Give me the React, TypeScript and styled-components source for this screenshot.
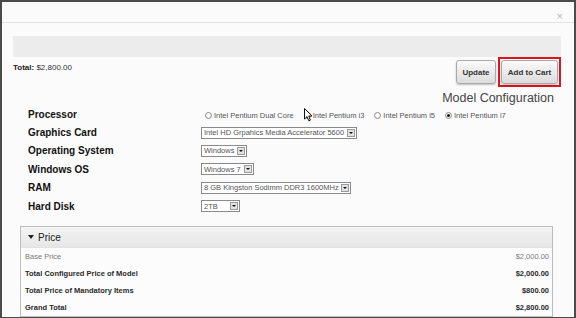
import { Fragment } from 'react'
import styled, { createGlobalStyle } from 'styled-components'

const GlobalStyle = createGlobalStyle`
  html, body {
    margin: 0;
    padding: 0;
    background: #fff;
  }
  body {
    font-family: 'Liberation Sans', Arial, sans-serif;
  }
`

const Modal = styled.div`
  width: 576px;
  height: 318px;
  box-sizing: border-box;
  border-style: solid;
  border-color: #4a4a4a;
  border-width: 2px 2px 1px 2px;
  background: #fbfbfb;
  overflow: hidden;
  display: flex;
  flex-direction: column;
`

const Header = styled.div`
  height: 20px;
  flex: 0 0 20px;
  border-bottom: 1px solid #e3e3e3;
  display: flex;
  justify-content: flex-end;
  align-items: flex-end;
  padding-right: 11px;
`

const Close = styled.span`
  font-size: 11px;
  line-height: 10px;
  color: #b8b8b8;
  margin-bottom: 1px;
`

const Body = styled.div`
  padding: 13px 13px 0 11px;
`

const GrayBar = styled.div`
  height: 21px;
  background: #ececec;
`

const Toolbar = styled.div`
  display: flex;
  justify-content: space-between;
  align-items: flex-start;
  height: 30px;
`

const Total = styled.div`
  margin-top: 6px;
  font-size: 8px;
  line-height: 10px;
  color: #333;

  b {
    color: #222;
  }
`

const Actions = styled.div`
  display: flex;
  align-items: center;
  gap: 2px;
  height: 30px;
`

const Button = styled.button<{ $w: number }>`
  width: ${(p) => p.$w}px;
  height: 24px;
  box-sizing: border-box;
  border: 1px solid #a9a9a9;
  border-radius: 3px;
  background: linear-gradient(#fafafa, #dcdcdc);
  font-family: 'Liberation Sans', Arial, sans-serif;
  font-weight: bold;
  font-size: 8px;
  color: #333;
  padding: 0;
  box-shadow: 0 1px 2px rgba(0, 0, 0, 0.25);
`

const Highlight = styled.div`
  border: 2px solid #e0141c;
  padding: 1px;
  display: flex;
`

const Title = styled.div`
  margin-top: 4px;
  padding-right: 7px;
  text-align: right;
  font-size: 12.5px;
  line-height: 14px;
  color: #444;
`

const Form = styled.div`
  display: grid;
  grid-template-columns: 173px 1fr;
  grid-auto-rows: 18.4px;
  align-items: center;
  padding-left: 15px;
`

const Label = styled.div`
  font-weight: bold;
  font-size: 10px;
  color: #111;
`

const RadioRow = styled.div`
  display: flex;
  align-items: center;
  margin-top: 3px;
`

const Option = styled.span`
  position: relative;
  display: inline-flex;
  align-items: center;
  font-size: 7.5px;
  color: #555;
  margin-left: 4px;
  margin-right: 6px;
`

const Radio = styled.span<{ $on?: boolean }>`
  width: 7px;
  height: 7px;
  box-sizing: border-box;
  border-radius: 50%;
  border: 1px solid #8c8c8c;
  background: radial-gradient(circle at 40% 35%, #fff 40%, #e4e4e4);
  margin-right: 2px;
  display: flex;
  align-items: center;
  justify-content: center;

  &::after {
    content: '';
    width: 3px;
    height: 3px;
    border-radius: 50%;
    background: ${(p) => (p.$on ? '#111' : 'transparent')};
  }
`

const Cursor = styled.svg`
  position: absolute;
  left: 0;
  top: -3px;
`

const Select = styled.div<{ $w: number }>`
  width: ${(p) => p.$w}px;
  height: 12px;
  box-sizing: border-box;
  border: 1px solid #8a8a8a;
  background: #fff;
  display: flex;
  align-items: center;
  padding-left: 2px;
  font-size: 7.5px;
  color: #555;
  white-space: nowrap;
`

const Arrow = styled.span`
  margin-left: auto;
  margin-right: 1px;
  width: 8px;
  height: 8px;
  box-sizing: border-box;
  border: 1px solid #9a9a9a;
  background: #e2e2e2;
  display: flex;
  align-items: center;
  justify-content: center;

  &::after {
    content: '';
    border-left: 2px solid transparent;
    border-right: 2px solid transparent;
    border-top: 2px solid #111;
  }
`

const Panel = styled.div`
  margin: 11px 8px 0 7px;
  border: 1px solid #bdbdbd;
  background: #fcfcfc;
`

const PanelHead = styled.div`
  height: 20px;
  display: flex;
  align-items: center;
  gap: 4px;
  padding-left: 7px;
  background: linear-gradient(#f4f4f4, #e6e6e6);
  border-bottom: 1px solid #e2e2e2;
  font-size: 10px;
  color: #222;
`

const Caret = styled.span`
  width: 0;
  height: 0;
  border-left: 3px solid transparent;
  border-right: 3px solid transparent;
  border-top: 4px solid #222;
`

const PriceRow = styled.div<{ $strong?: boolean }>`
  height: 17px;
  display: flex;
  align-items: center;
  justify-content: space-between;
  padding: 0 3px 0 4px;
  font-size: 7.5px;
  font-weight: ${(p) => (p.$strong ? 'bold' : 'normal')};
  color: ${(p) => (p.$strong ? '#2a2a2a' : '#7a7a7a')};
`

const fields = [
  { label: 'Graphics Card', value: 'Intel HD Grpahics Media Accelerator 5600', w: 156 },
  { label: 'Operating System', value: 'Windows', w: 46 },
  { label: 'Windows OS', value: 'Windows 7', w: 53 },
  { label: 'RAM', value: '8 GB Kingston Sodimm DDR3 1600MHz', w: 150 },
  { label: 'Hard Disk', value: '2TB', w: 39 },
]

const processors = ['Intel Pentium Dual Core', 'Intel Pentium i3', 'Intel Pentium i5', 'Intel Pentium i7']

const prices = [
  { label: 'Base Price', value: '$2,000.00' },
  { label: 'Total Configured Price of Model', value: '$2,000.00', strong: true },
  { label: 'Total Price of Mandatory Items', value: '$800.00', strong: true },
  { label: 'Grand Total', value: '$2,800.00', strong: true },
]

export default function App() {
  return (
    <>
      <GlobalStyle />
      <Modal>
        <Header>
          <Close>×</Close>
        </Header>
        <Body>
          <GrayBar />
          <Toolbar>
            <Total>
              <b>Total:</b> $2,800.00
            </Total>
            <Actions>
              <Button $w={40}>Update</Button>
              <Highlight>
                <Button $w={57}>Add to Cart</Button>
              </Highlight>
            </Actions>
          </Toolbar>
          <Title>Model Configuration</Title>
          <Form>
            <Label>Processor</Label>
            <RadioRow>
              {processors.map((p, i) => (
                <Option key={p}>
                  <Radio $on={i === 3} />
                  {p}
                  {i === 1 && (
                    <Cursor width="9" height="14" viewBox="0 0 9 14">
                      <path
                        d="M0.5 0.5 L0.5 11 L3 8.6 L4.8 12.8 L6.4 12.1 L4.7 8 L8 8 Z"
                        fill="#fff"
                        stroke="#111"
                        strokeWidth="1"
                        strokeLinejoin="round"
                      />
                    </Cursor>
                  )}
                </Option>
              ))}
            </RadioRow>
            {fields.map((f) => (
              <Fragment key={f.label}>
                <Label>{f.label}</Label>
                <Select $w={f.w}>
                  {f.value}
                  <Arrow />
                </Select>
              </Fragment>
            ))}
          </Form>
          <Panel>
            <PanelHead>
              <Caret />
              Price
            </PanelHead>
            {prices.map((r) => (
              <PriceRow key={r.label} $strong={r.strong}>
                <span>{r.label}</span>
                <span>{r.value}</span>
              </PriceRow>
            ))}
          </Panel>
        </Body>
      </Modal>
    </>
  )
}
